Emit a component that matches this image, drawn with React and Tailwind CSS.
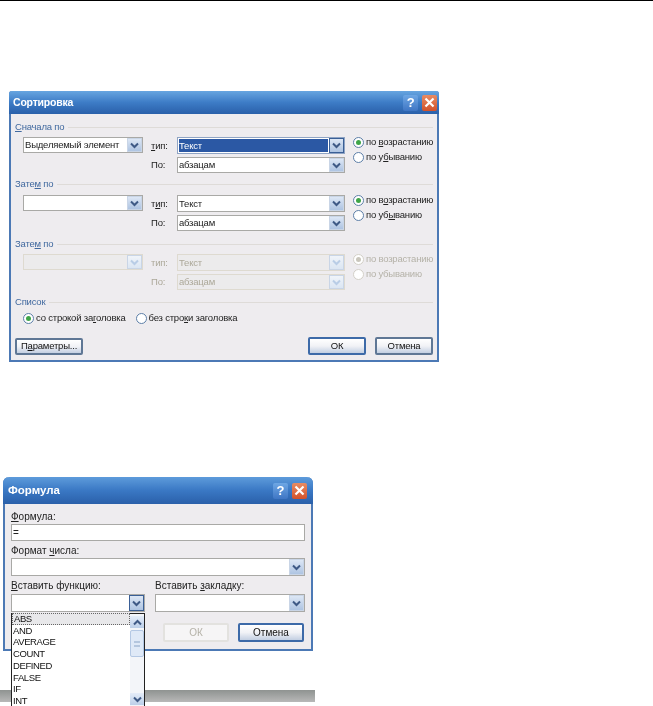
import { Fragment } from "react";

// thick little chevron used on all the XP combo buttons
function Arrow({ disabled, up }) {
  return (
    <svg width="9" height="7" viewBox="0 0 9 7" className={up ? "rotate-180" : ""}>
      <path d="M1 1.5 L4.5 5 L8 1.5" fill="none" stroke={disabled ? "#b9cde6" : "#3f5a86"} strokeWidth="2" />
    </svg>
  );
}

function ComboButton({ disabled, active }) {
  const tone = disabled
    ? "from-[#f0f4f9] to-[#dbe6f3]"
    : "from-[#dde7f5] to-[#aec4e2]";
  return (
    <div
      className={`flex h-full w-[15px] shrink-0 items-center justify-center border bg-gradient-to-b ${tone} ${
        active ? "border-[#3a5f96]" : "border-[#c9d5e6]"
      }`}
    >
      <Arrow disabled={disabled} />
    </div>
  );
}

function Combo({ text, disabled, selected, active, className = "" }) {
  return (
    <div
      className={`flex shrink-0 items-stretch whitespace-nowrap border ${className} ${
        disabled
          ? "border-[#dedad0] bg-[#ecebec] text-[#aca899]"
          : selected
            ? "border-[#8fa4c4] bg-white text-black"
            : "border-[#a9a9a6] bg-white text-[#222]"
      }`}
    >
      <div className="flex min-w-0 flex-1 items-center p-px">
        <div
          className={`flex h-full w-full items-center ${
            selected ? "bg-[#2b58a4] text-white" : ""
          }`}
        >
          {text}
        </div>
      </div>
      <ComboButton disabled={disabled} active={selected || active} />
    </div>
  );
}

function Radio({ checked, disabled, children }) {
  return (
    <div className={`flex h-[12px] items-center gap-[2px] ${disabled ? "text-[#b5b2a8]" : "text-[#222]"}`}>
      <span
        className={`flex h-[11px] w-[11px] shrink-0 items-center justify-center rounded-full border bg-white ${
          disabled ? "border-[#d3d0c8]" : "border-[#5d7fa8]"
        }`}
      >
        {checked && (
          <span className={`h-[5px] w-[5px] rounded-full ${disabled ? "bg-[#c9c6bc]" : "bg-[#3fa548]"}`} />
        )}
      </span>
      <span className="whitespace-nowrap">{children}</span>
    </div>
  );
}

function GroupLabel({ children, className = "" }) {
  return (
    <div className={`flex h-[12px] items-center gap-[4px] text-[#41699f] ${className}`}>
      <span className="whitespace-nowrap">{children}</span>
      <div className="h-px flex-1 bg-[#dedbd8]" />
    </div>
  );
}

function SortRow({ first, typeLabel, asc, desc, disabled, selected }) {
  const labelTone = disabled ? "text-[#aca899]" : "text-[#222]";
  return (
    <div className="flex items-start pl-[8px]">
      <Combo text={first} disabled={disabled} className="h-[16px] w-[120px]" />
      <div className={`ml-[8px] flex w-[26px] shrink-0 flex-col gap-[3px] ${labelTone}`}>
        <div className="flex h-[17px] items-center">{typeLabel}</div>
        <div className="flex h-[16px] items-center">По:</div>
      </div>
      <div className="flex w-[168px] shrink-0 flex-col gap-[3px]">
        <Combo text="Текст" disabled={disabled} selected={selected} className="h-[17px]" />
        <Combo text="абзацам" disabled={disabled} className="h-[16px]" />
      </div>
      <div className="-mt-px ml-[8px] flex flex-col gap-[3px]">
        <Radio checked disabled={disabled}>{asc}</Radio>
        <Radio disabled={disabled}>{desc}</Radio>
      </div>
    </div>
  );
}

function TitleButtons() {
  return (
    <div className="flex gap-[4px]">
      <div className="flex h-[16px] w-[15px] items-center justify-center rounded-[2px] bg-gradient-to-b from-[#6ea7e4] to-[#3f76c4] text-[13px] leading-none font-bold text-white">
        ?
      </div>
      <div className="flex h-[16px] w-[15px] items-center justify-center rounded-[2px] bg-gradient-to-b from-[#e88b62] to-[#d2512a]">
        <svg width="11" height="11" viewBox="0 0 11 11">
          <path d="M1.5 1.5 L9.5 9.5 M9.5 1.5 L1.5 9.5" stroke="#fff" strokeWidth="2.2" />
        </svg>
      </div>
    </div>
  );
}

function XpButton({ children, focused, disabled, className = "" }) {
  return (
    <div
      className={`flex items-center justify-center rounded-[2px] border-2 ${className} ${
        disabled
          ? "border-[#e3e2df] bg-[#f6f5f6] text-[#b5b2a8]"
          : `bg-gradient-to-b from-white via-[#f1f2f6] to-[#c3cfe2] text-[#111] ${
              focused ? "border-[#3d6aa8]" : "border-[#5f7795]"
            }`
      }`}
    >
      {children}
    </div>
  );
}

function SortDialog() {
  return (
    <div className="ml-[9px] mt-[90px] flex h-[271px] w-[430px] flex-col rounded-t-[3px] border-x-2 border-b-2 border-[#4c79b5] bg-[#eeecef] text-[9.5px] leading-none tracking-[-0.2px]">
      <div className="-mx-[2px] flex h-[23px] shrink-0 items-center justify-between rounded-t-[3px] bg-gradient-to-b from-[#67a5e0] via-[#3d7cc6] to-[#2a60aa] pl-[4px] pr-[2px]">
        <span className="text-[10.5px] font-bold tracking-[-0.2px] text-white">Сортировка</span>
        <TitleButtons />
      </div>
      <div className="flex flex-1 flex-col px-[4px]">
        <GroupLabel className="mt-[7px]"><u>С</u>начала по</GroupLabel>
        <div className="mt-[4px]">
          <SortRow first="Выделяемый элемент" typeLabel={<Fragment><u>т</u>ип:</Fragment>} asc={<Fragment>по <u>в</u>озрастанию</Fragment>} desc={<Fragment>по у<u>б</u>ыванию</Fragment>} selected />
        </div>
        <GroupLabel className="mt-[5px]">Зате<u>м</u> по</GroupLabel>
        <div className="mt-[5px]">
          <SortRow typeLabel={<Fragment>т<u>и</u>п:</Fragment>} asc={<Fragment>по в<u>о</u>зрастанию</Fragment>} desc={<Fragment>по уб<u>ы</u>ванию</Fragment>} />
        </div>
        <GroupLabel className="mt-[7px]">Зате<u>м</u> по</GroupLabel>
        <div className="mt-[4px]">
          <SortRow disabled typeLabel="тип:" asc="по возрастанию" desc="по убыванию" />
        </div>
        <GroupLabel className="mt-[6px]">Список</GroupLabel>
        <div className="mt-[4px] flex gap-[10px] pl-[8px]">
          <Radio checked>со строкой за<u>г</u>оловка</Radio>
          <Radio>без стро<u>к</u>и заголовка</Radio>
        </div>
        <div className="mt-[13px] flex items-center">
          <XpButton className="h-[17px] w-[68px]" focused={false}>П<u>а</u>раметры...</XpButton>
          <XpButton className="ml-auto h-[18px] w-[58px]" focused>ОК</XpButton>
          <XpButton className="ml-[9px] h-[18px] w-[58px]">Отмена</XpButton>
        </div>
      </div>
    </div>
  );
}

const functions = ["ABS", "AND", "AVERAGE", "COUNT", "DEFINED", "FALSE", "IF", "INT"];

function FunctionList() {
  return (
    <div className="absolute left-[6px] top-[136px] flex h-[100px] w-[134px] border border-[#222] bg-white text-[9.5px] tracking-[-0.4px] text-[#111]">
      <div className="-mt-px flex-1">
        {functions.map((name, i) => (
          <div
            key={name}
            className={`flex h-[11.7px] items-center pl-px ${
              i === 0 ? "border border-dotted border-[#666] bg-[#e8e8ea]" : ""
            }`}
          >
            {name}
          </div>
        ))}
      </div>
      <div className="flex w-[14px] flex-col bg-[#f3f5f9]">
        <div className="mt-[2px] flex h-[12px] items-center justify-center bg-gradient-to-b from-[#e4ecf8] to-[#bccfe9]">
          <Arrow up />
        </div>
        <div className="mt-[2px] flex h-[27px] items-center justify-center rounded-[2px] border border-[#b4c8e4] bg-[#dfe9f7]">
          <div className="h-[6px] w-[6px] border-y-2 border-[#b4c6de]" />
        </div>
        <div className="mt-[36px] flex h-[12px] items-center justify-center bg-gradient-to-b from-[#e4ecf8] to-[#bccfe9]">
          <Arrow />
        </div>
      </div>
    </div>
  );
}

function FormulaDialog() {
  return (
    <div className="relative ml-[3px] mt-[115px] flex h-[174px] w-[310px] flex-col rounded-t-[6px] border-x-2 border-b-2 border-[#4c79b5] bg-[#eeecef] text-[10px] leading-none text-[#222]">
      <div className="-mx-[2px] flex h-[27px] shrink-0 items-center justify-between rounded-t-[6px] bg-gradient-to-b from-[#5d9bdb] via-[#3a78c4] to-[#2a60aa] pl-[5px] pr-[6px]">
        <span className="text-[11.5px] font-bold text-white">Формула</span>
        <TitleButtons />
      </div>
      <div className="flex flex-1 flex-col px-[6px]">
        <div className="mt-[8px] h-[12px]"><u>Ф</u>ормула:</div>
        <div className="flex h-[17px] w-[294px] items-center border border-[#a9a9a6] bg-white pl-px">=</div>
        <div className="mt-[5px] h-[12px]">Формат <u>ч</u>исла:</div>
        <Combo className="h-[18px] w-[294px]" />
        <div className="mt-[5px] flex">
          <div className="h-[12px] w-[144px]"><u>В</u>ставить функцию:</div>
          <div className="h-[12px]">Вставить <u>з</u>акладку:</div>
        </div>
        <div className="mt-[1px] flex">
          <Combo active className="h-[18px] w-[134px]" />
          <Combo className="ml-[10px] h-[18px] w-[150px]" />
        </div>
        <div className="mt-[11px] flex pl-[152px]">
          <XpButton disabled className="h-[19px] w-[66px]">ОК</XpButton>
          <XpButton className="ml-[9px] h-[19px] w-[66px]" focused>Отмена</XpButton>
        </div>
      </div>
      <FunctionList />
    </div>
  );
}

export default function App() {
  return (
    <div className="h-[706px] overflow-hidden bg-white font-['Liberation_Sans',sans-serif] blur-[0.45px]">
      <div className="h-px bg-black" />
      <SortDialog />
      <FormulaDialog />
      <div className="mt-[39px] h-[12px] w-[315px] bg-gradient-to-b from-[#8f9391] to-[#b8b8b8]" />
    </div>
  );
}
